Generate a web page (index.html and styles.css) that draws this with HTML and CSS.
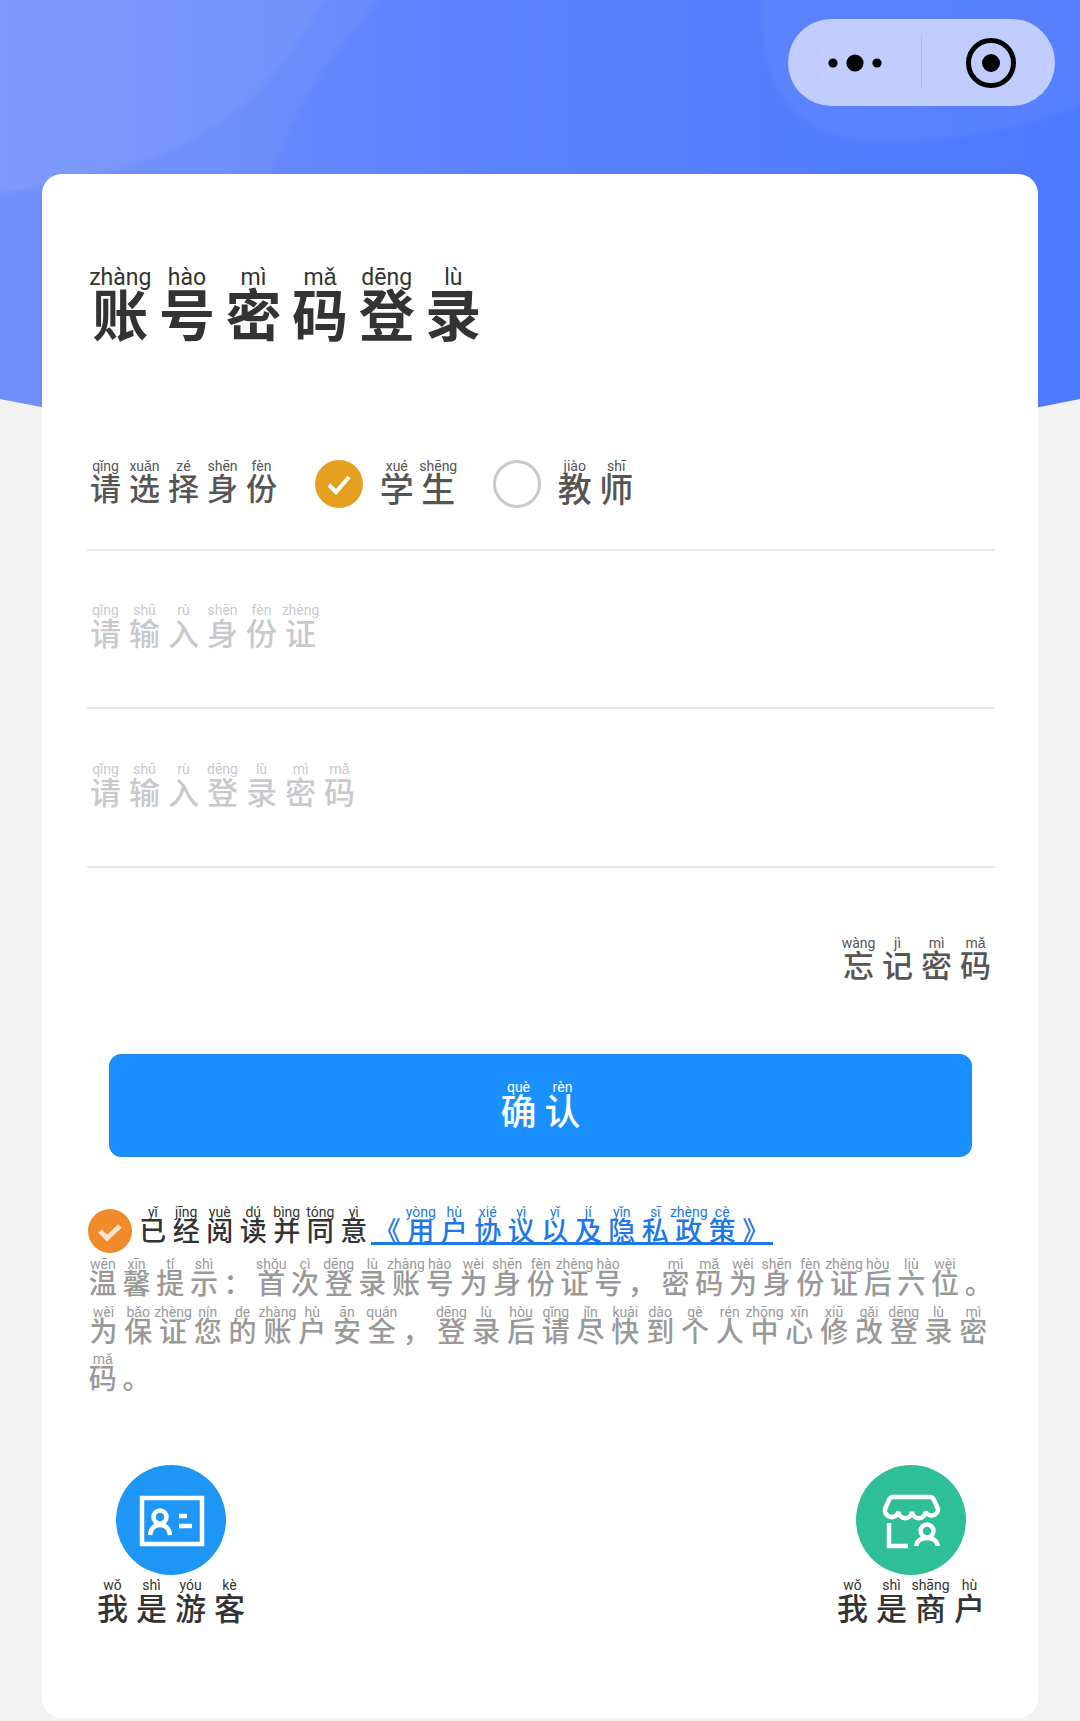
FILE: index.html
```html
<!DOCTYPE html>
<html lang="zh-CN">
<head>
    <meta charset="UTF-8">
    <meta name="viewport" content="width=device-width, initial-scale=1.0">
    <title>账号密码登录</title>
    <link rel="stylesheet" href="styles.css">
</head>
<body>
    <svg class="hero" viewBox="0 0 1080 460" aria-hidden="true">
        <defs>
            <linearGradient id="heroFill" x1="0" y1="0" x2="1" y2="0">
                <stop offset="0" stop-color="#6f8ffb"/>
                <stop offset="0.55" stop-color="#587ffd"/>
                <stop offset="1" stop-color="#4d79ff"/>
            </linearGradient>
        </defs>
        <path d="M0 0H1080V399Q540 510 0 399Z" fill="url(#heroFill)"/>
        <path class="hero-soft" d="M-10 -10H388Q320 70 300 110T265 190H-10Z" fill="#fff" fill-opacity="0.05"/>
        <path class="hero-soft" d="M-10 -10H330Q290 60 250 100Q190 150 133 165Q60 185 -10 197Z" fill="#fff" fill-opacity="0.06"/>
        <path class="hero-soft" d="M764 -10Q750 142 888 142Q990 142 1090 103V-10Z" fill="#fff" fill-opacity="0.05"/>
    </svg>

    <div class="capsule">
        <svg class="capsule-dots" viewBox="0 0 60 24" aria-hidden="true">
            <circle cx="8" cy="12" r="4.6"/>
            <circle cx="30" cy="12" r="8.6"/>
            <circle cx="52" cy="12" r="4.6"/>
        </svg>
        <span class="capsule-line"></span>
        <svg class="capsule-target" viewBox="0 0 50 50" aria-hidden="true">
            <circle class="target-ring" cx="25" cy="25" r="22.5"/>
            <circle cx="25" cy="25" r="9"/>
        </svg>
    </div>

    <div class="card">
        <h1 class="title">
            <ruby>账<rt>zhàng</rt></ruby><ruby>号<rt>hào</rt></ruby><ruby>密<rt>mì</rt></ruby><ruby>码<rt>mǎ</rt></ruby><ruby>登<rt>dēng</rt></ruby><ruby>录<rt>lù</rt></ruby>
        </h1>

        <div class="field role-field">
            <div class="role-label">
                <ruby>请<rt>qǐng</rt></ruby><ruby>选<rt>xuǎn</rt></ruby><ruby>择<rt>zé</rt></ruby><ruby>身<rt>shēn</rt></ruby><ruby>份<rt>fèn</rt></ruby>
            </div>
            <span class="radio radio-on">
                <svg viewBox="0 0 48 48" aria-hidden="true"><path d="M14 25l7 7 13-15"/></svg>
            </span>
            <div class="role-option">
                <ruby>学<rt>xué</rt></ruby><ruby>生<rt>shēng</rt></ruby>
            </div>
            <span class="radio"></span>
            <div class="role-option">
                <ruby>教<rt>jiào</rt></ruby><ruby>师<rt>shī</rt></ruby>
            </div>
        </div>

        <div class="field placeholder">
            <ruby>请<rt>qǐng</rt></ruby><ruby>输<rt>shū</rt></ruby><ruby>入<rt>rù</rt></ruby><ruby>身<rt>shēn</rt></ruby><ruby>份<rt>fèn</rt></ruby><ruby>证<rt>zhèng</rt></ruby>
        </div>
        <div class="field placeholder">
            <ruby>请<rt>qǐng</rt></ruby><ruby>输<rt>shū</rt></ruby><ruby>入<rt>rù</rt></ruby><ruby>登<rt>dēng</rt></ruby><ruby>录<rt>lù</rt></ruby><ruby>密<rt>mì</rt></ruby><ruby>码<rt>mǎ</rt></ruby>
        </div>

        <div class="forgot">
            <ruby>忘<rt>wàng</rt></ruby><ruby>记<rt>jì</rt></ruby><ruby>密<rt>mì</rt></ruby><ruby>码<rt>mǎ</rt></ruby>
        </div>

        <button class="confirm" type="button">
            <ruby>确<rt>què</rt></ruby><ruby>认<rt>rèn</rt></ruby>
        </button>

        <div class="agree">
            <span class="agree-check">
                <svg viewBox="0 0 44 44" aria-hidden="true"><path d="M12 22l7 7 13-12"/></svg>
            </span>
            <ruby>已<rt>yǐ</rt></ruby><ruby>经<rt>jīng</rt></ruby><ruby>阅<rt>yuè</rt></ruby><ruby>读<rt>dú</rt></ruby><ruby>并<rt>bìng</rt></ruby><ruby>同<rt>tóng</rt></ruby><ruby>意<rt>yì</rt></ruby>
            <a class="agree-link">
                <ruby>《<rt></rt></ruby><ruby>用<rt>yòng</rt></ruby><ruby>户<rt>hù</rt></ruby><ruby>协<rt>xié</rt></ruby><ruby>议<rt>yì</rt></ruby><ruby>以<rt>yǐ</rt></ruby><ruby>及<rt>jí</rt></ruby><ruby>隐<rt>yǐn</rt></ruby><ruby>私<rt>sī</rt></ruby><ruby>政<rt>zhèng</rt></ruby><ruby>策<rt>cè</rt></ruby><ruby>》<rt></rt></ruby>
            </a>
        </div>

        <div class="tips">
            <div class="tip-line">
                <ruby>温<rt>wēn</rt></ruby><ruby>馨<rt>xīn</rt></ruby><ruby>提<rt>tí</rt></ruby><ruby>示<rt>shì</rt></ruby><ruby>：<rt></rt></ruby><ruby>首<rt>shǒu</rt></ruby><ruby>次<rt>cì</rt></ruby><ruby>登<rt>dēng</rt></ruby><ruby>录<rt>lù</rt></ruby><ruby>账<rt>zhàng</rt></ruby><ruby>号<rt>hào</rt></ruby><ruby>为<rt>wèi</rt></ruby><ruby>身<rt>shēn</rt></ruby><ruby>份<rt>fèn</rt></ruby><ruby>证<rt>zhèng</rt></ruby><ruby>号<rt>hào</rt></ruby><ruby>，<rt></rt></ruby><ruby>密<rt>mì</rt></ruby><ruby>码<rt>mǎ</rt></ruby><ruby>为<rt>wèi</rt></ruby><ruby>身<rt>shēn</rt></ruby><ruby>份<rt>fèn</rt></ruby><ruby>证<rt>zhèng</rt></ruby><ruby>后<rt>hòu</rt></ruby><ruby>六<rt>liù</rt></ruby><ruby>位<rt>wèi</rt></ruby><ruby>。<rt></rt></ruby>
            </div>
            <div class="tip-line tip-wide">
                <ruby>为<rt>wèi</rt></ruby><ruby>保<rt>bǎo</rt></ruby><ruby>证<rt>zhèng</rt></ruby><ruby>您<rt>nín</rt></ruby><ruby>的<rt>de</rt></ruby><ruby>账<rt>zhàng</rt></ruby><ruby>户<rt>hù</rt></ruby><ruby>安<rt>ān</rt></ruby><ruby>全<rt>quán</rt></ruby><ruby>，<rt></rt></ruby><ruby>登<rt>dēng</rt></ruby><ruby>录<rt>lù</rt></ruby><ruby>后<rt>hòu</rt></ruby><ruby>请<rt>qǐng</rt></ruby><ruby>尽<rt>jǐn</rt></ruby><ruby>快<rt>kuài</rt></ruby><ruby>到<rt>dào</rt></ruby><ruby>个<rt>gè</rt></ruby><ruby>人<rt>rén</rt></ruby><ruby>中<rt>zhōng</rt></ruby><ruby>心<rt>xīn</rt></ruby><ruby>修<rt>xiū</rt></ruby><ruby>改<rt>gǎi</rt></ruby><ruby>登<rt>dēng</rt></ruby><ruby>录<rt>lù</rt></ruby><ruby>密<rt>mì</rt></ruby>
            </div>
            <div class="tip-line">
                <ruby>码<rt>mǎ</rt></ruby><ruby>。<rt></rt></ruby>
            </div>
        </div>

        <div class="others">
            <div class="other">
                <span class="other-icon guest-icon">
                    <svg viewBox="0 0 110 110" aria-hidden="true">
                        <rect x="26" y="33" width="60" height="46"/>
                        <circle cx="44" cy="52" r="6.5"/>
                        <path d="M34 70c1-7 5-10 10-10s9 3 10 10"/>
                        <path d="M63 51h8M63 61h13"/>
                    </svg>
                </span>
                <div class="other-name">
                    <ruby>我<rt>wǒ</rt></ruby><ruby>是<rt>shì</rt></ruby><ruby>游<rt>yóu</rt></ruby><ruby>客<rt>kè</rt></ruby>
                </div>
            </div>
            <div class="other">
                <span class="other-icon shop-icon">
                    <svg viewBox="0 0 110 110" aria-hidden="true">
                        <path d="M37 32H74Q77 32 78 35L82 44A6.5 6.5 0 0 1 69.5 46.5A6.5 6.5 0 0 1 56 46.5A6.5 6.5 0 0 1 42.5 46.5A6.5 6.5 0 0 1 29 44L33 35Q34 32 37 32Z"/>
                        <path d="M33 58V81H52"/>
                        <circle cx="71" cy="66" r="6.5"/>
                        <path d="M60 81c1-6 5-8 11-8s10 2 11 8"/>
                    </svg>
                </span>
                <div class="other-name">
                    <ruby>我<rt>wǒ</rt></ruby><ruby>是<rt>shì</rt></ruby><ruby>商<rt>shāng</rt></ruby><ruby>户<rt>hù</rt></ruby>
                </div>
            </div>
        </div>
    </div>
</body>
</html>
```

FILE: styles.css
```css
* {
    box-sizing: border-box;
}

body {
    position: relative;
    width: 1080px;
    height: 1721px;
    margin: 0;
    overflow: hidden;
    background-color: #f2f2f2;
    font-family: "Noto Sans CJK SC", sans-serif;
}

/* every character with its pinyin is one small column */
ruby {
    display: inline-flex;
    flex-direction: column-reverse;
    align-items: center;
    flex: none;
    width: 39px;
    font-size: 31px;
    font-weight: 500;
    line-height: 1;
}

rt {
    display: block;
    height: 11px;
    font-family: Roboto, sans-serif;
    font-size: 14px;
    font-weight: 400;
    line-height: 11px;
    white-space: nowrap;
    text-align: center;
}

.hero {
    position: absolute;
    top: 0;
    left: 0;
    width: 1080px;
    height: 460px;
}

.hero-soft {
    filter: blur(2px);
}

.capsule {
    position: absolute;
    top: 19px;
    left: 788px;
    z-index: 2;
    display: flex;
    align-items: center;
    width: 267px;
    height: 87px;
    padding-left: 37px;
    border-radius: 44px;
    background-color: #c1cdfe;
}

.capsule-dots {
    width: 60px;
    height: 24px;
}

.capsule-line {
    width: 1px;
    height: 53px;
    margin-left: 36px;
    background-color: #a9b7ee;
}

.capsule-target {
    width: 50px;
    height: 50px;
    margin-left: 44px;
}

.target-ring {
    fill: none;
    stroke: #000;
    stroke-width: 5;
}

.card {
    position: relative;
    z-index: 1;
    width: 996px;
    height: 1544px;
    margin: 174px 42px 0;
    padding: 96.5px 43px 0 45px;
    border-radius: 20px;
    background-color: #fff;
}

.title {
    display: flex;
    margin: 0;
    color: #333;
}

.title ruby {
    width: 66.6px;
    font-size: 56px;
    font-weight: 700;
}

.title rt {
    height: 13px;
    font-size: 23px;
    line-height: 13px;
}

.field {
    display: flex;
    align-items: flex-start;
    height: 158.5px;
    padding-top: 54.5px;
    border-bottom: 2px solid #e8e8e8;
}

.role-field {
    margin-top: 52.5px;
    padding-top: 70px;
    color: #555;
}

.role-field rt {
    height: 9px;
    line-height: 9px;
}

.role-label {
    display: flex;
    margin-left: -1px;
}

.role-option {
    display: flex;
    margin-left: 13px;
}

.role-option ruby {
    width: 41.5px;
    font-size: 34px;
}

.radio {
    flex: none;
    width: 48px;
    height: 48px;
    margin-top: -2px;
    margin-left: 34px;
    border: 3px solid #c8c9cc;
    border-radius: 50%;
}

.radio-on {
    border: none;
    background-color: #e6a020;
}

.radio svg {
    display: block;
    width: 48px;
    height: 48px;
    fill: none;
    stroke: #fff;
    stroke-width: 4;
}

.placeholder {
    color: #c8c9cc;
}

.placeholder ruby:first-child {
    margin-left: -1px;
}

.forgot {
    display: flex;
    justify-content: flex-end;
    margin-top: 70.5px;
    color: #555;
}

.forgot rt {
    height: 10px;
    line-height: 10px;
}

.confirm {
    display: flex;
    justify-content: center;
    align-items: center;
    width: 863px;
    height: 103px;
    margin: 74.5px 0 0 22px;
    padding: 0;
    border: 1px solid #2b85e4;
    border-radius: 12px;
    background-color: #1a8fff;
    color: #fff;
    font-family: inherit;
}

.confirm ruby {
    width: 44px;
    font-size: 36px;
}

.confirm rt {
    height: 8px;
    line-height: 8px;
}

.agree {
    display: flex;
    align-items: flex-start;
    height: 44px;
    margin-top: 52px;
    color: #333;
}

.agree ruby {
    width: 33.5px;
    margin-top: 0.5px;
    font-size: 27px;
}

.agree rt {
    height: 7px;
    line-height: 7px;
}

.agree-check {
    flex: none;
    width: 44px;
    height: 44px;
    margin-left: 1px;
    margin-right: 4px;
    border-radius: 50%;
    background: radial-gradient(circle, #f08a2a 60%, #f07f1c 100%);
}

.agree-check svg {
    display: block;
    width: 44px;
    height: 44px;
    fill: none;
    stroke: #fbe3cc;
    stroke-width: 5;
}

.agree-link {
    display: flex;
    border-bottom: 3px solid #1e78e6;
    color: #1e78e6;
}

.agree-link ruby {
    margin-bottom: -1.5px;
}

.tips {
    margin-top: 8.5px;
    color: #999;
}

.tip-line {
    display: flex;
    align-items: flex-start;
    height: 47.5px;
    margin-left: -1px;
}

.tip-line ruby {
    width: 33.7px;
    font-size: 28px;
}

.tip-line rt {
    height: 7px;
    line-height: 7px;
}

.tip-wide ruby {
    width: 34.8px;
}

.others {
    display: flex;
    justify-content: space-between;
    margin-top: 61.5px;
    padding: 0 6px 0 6px;
}

.other {
    display: flex;
    flex-direction: column;
    align-items: center;
}

.other-icon {
    display: block;
    width: 110px;
    height: 110px;
    border-radius: 50%;
}

.guest-icon {
    background-color: #1e96f5;
}

.shop-icon {
    background-color: #2fbf96;
}

.other-icon svg {
    display: block;
    width: 110px;
    height: 110px;
    fill: none;
    stroke: #fff;
    stroke-width: 4.5;
}

.other-name {
    display: flex;
    margin-top: 5px;
    color: #333;
}
```
